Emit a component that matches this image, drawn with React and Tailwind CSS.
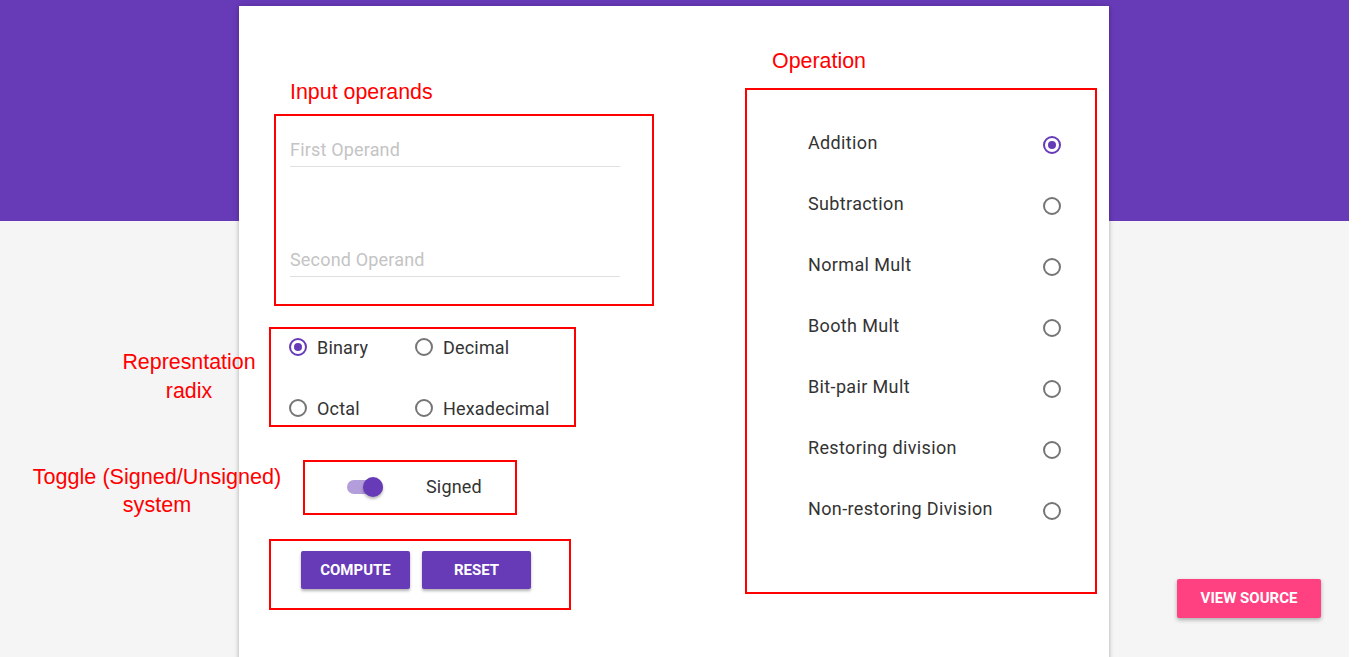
const roboto = { fontFamily: "Roboto, 'Noto Sans', sans-serif" };
const arial = { fontFamily: "'Liberation Sans', Arial, sans-serif" };

const operations = [
  "Addition",
  "Subtraction",
  "Normal Mult",
  "Booth Mult",
  "Bit-pair Mult",
  "Restoring division",
  "Non-restoring Division",
];

function Radio({ checked }) {
  return (
    <span
      className={`w-[18px] h-[18px] shrink-0 rounded-full border-2 flex items-center justify-center ${
        checked ? "border-[#673ab7]" : "border-[#757575]"
      }`}
    >
      {checked && <span className="w-2 h-2 rounded-full bg-[#673ab7]" />}
    </span>
  );
}

function RadixOption({ label, checked }) {
  return (
    <label className="flex items-center h-6">
      <Radio checked={checked} />
      <span className="ml-[10px] text-[18px] tracking-[0.01em] text-[#333]">{label}</span>
    </label>
  );
}

function OperandField({ placeholder }) {
  return (
    <input
      type="text"
      placeholder={placeholder}
      className="block w-[330px] h-[31px] pb-[3px] border-b border-[#e0e0e0] bg-transparent outline-none text-[18px] tracking-[0.01em] text-[#333] placeholder:text-[#c4c4c4]"
    />
  );
}

export default function App() {
  return (
    <div className="w-full h-[657px] overflow-hidden bg-white" style={roboto}>
      <div className="relative w-[1349px] h-full bg-[#f5f5f5]">
        {/* HEADER */}
        <div className="h-[221px] bg-[#673ab7]" />

        {/* CARD */}
        <div className="relative -mt-[215px] ml-[239px] w-[870px] h-[700px] bg-white shadow-[0_2px_4px_rgba(0,0,0,0.2),0_0_6px_rgba(0,0,0,0.12)] flex">
          {/* left column */}
          <div className="w-[506px] pl-[30px] pt-[74px]">
            <div className="ml-[21px] text-[21.4px] leading-6 text-[#ff0000]" style={arial}>
              Input operands
            </div>

            <div className="mt-[10px] ml-[5px] w-[380px] h-[192px] border-2 border-[#ff0000] pl-[14px] pt-[20px]">
              <OperandField placeholder="First Operand" />
              <div className="h-[79px]" />
              <OperandField placeholder="Second Operand" />
            </div>

            <div className="mt-[21px] w-[307px] h-[100px] border-2 border-[#ff0000] pl-[18px] pt-[6px]">
              <div className="grid grid-cols-[126px_auto] gap-y-[37px]">
                <RadixOption label="Binary" checked />
                <RadixOption label="Decimal" />
                <RadixOption label="Octal" />
                <RadixOption label="Hexadecimal" />
              </div>
            </div>

            <div className="mt-[33px] ml-[34px] w-[214px] h-[55px] border-2 border-[#ff0000] pl-[42px] flex items-center">
              <div className="relative w-9 h-5 flex items-center -mt-[2px]">
                <span className="w-full h-[14px] rounded-full bg-[#b39ddb]" />
                <span className="absolute right-0 top-0 w-5 h-5 rounded-full bg-[#673ab7] shadow-[0_2px_3px_rgba(0,0,0,0.3)]" />
              </div>
              <span className="ml-[43px] -mt-[3px] text-[18px] tracking-[0.01em] text-[#333]">Signed</span>
            </div>

            <div className="mt-[24px] w-[302px] h-[71px] border-2 border-[#ff0000] pl-[30px] pt-[10px] flex items-start gap-3">
              <button className="w-[109px] h-[38px] rounded-[2px] bg-[#673ab7] text-white text-[15px] font-bold shadow-[0_2px_3px_rgba(0,0,0,0.3)]">
                COMPUTE
              </button>
              <button className="w-[109px] h-[38px] rounded-[2px] bg-[#673ab7] text-white text-[15px] font-bold shadow-[0_2px_3px_rgba(0,0,0,0.3)]">
                RESET
              </button>
            </div>
          </div>

          {/* right column */}
          <div className="pt-[43px]">
            <div className="ml-[27px] text-[21.4px] leading-6 text-[#ff0000]" style={arial}>
              Operation
            </div>
            <div className="mt-[15px] w-[352px] h-[506px] border-2 border-[#ff0000] pl-[61px] pr-[34px] pt-[24px]">
              {operations.map((op, i) => (
                <div key={op} className="h-[61px] flex items-center justify-between">
                  <span className="text-[18px] tracking-[0.02em] text-[#333] -mt-[4px]">{op}</span>
                  <Radio checked={i === 0} />
                </div>
              ))}
            </div>
          </div>
        </div>

        {/* annotations */}
        <div
          className="absolute left-[122px] top-[348px] w-[134px] text-center text-[21.4px] leading-[29px] text-[#ff0000]"
          style={arial}
        >
          Represntation
          <br />
          radix
        </div>
        <div
          className="absolute left-[31px] top-[463px] w-[252px] text-center text-[21.6px] leading-[28px] text-[#ff0000] whitespace-nowrap"
          style={arial}
        >
          Toggle (Signed/Unsigned)
          <br />
          system
        </div>

        <button className="absolute right-[28px] bottom-[39px] w-[144px] h-[39px] rounded-[2px] bg-[#ff4081] text-white text-[15px] font-bold shadow-[0_2px_4px_rgba(0,0,0,0.3)]">
          VIEW SOURCE
        </button>
      </div>
    </div>
  );
}
